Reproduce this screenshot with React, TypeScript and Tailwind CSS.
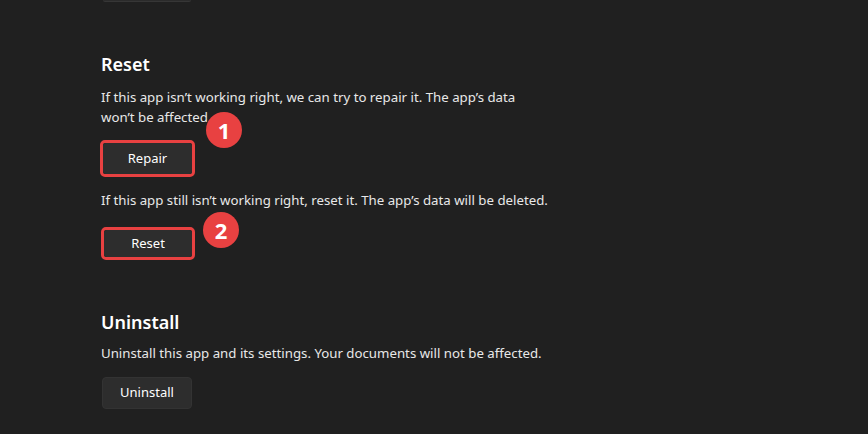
import React from 'react';

const font = { fontFamily: '"Noto Sans", "Open Sans", sans-serif' };

function Badge({ n, className }: { n: string; className: string }) {
  return (
    <div
      className={`absolute flex h-[36px] w-[36px] items-center justify-center rounded-full bg-[#e84141] text-[22px] font-bold leading-none text-white ${className}`}
    >
      {n}
    </div>
  );
}

export default function App() {
  return (
    <div
      style={font}
      className="h-[434px] w-[868px] overflow-hidden bg-[#202020] pl-[101px] text-[#e8e8e8]"
    >
      {/* bottom edge of the button above */}
      <div className="ml-[2px] h-[2px] w-[88px] rounded-b-[4px] border-b border-[#363636] bg-[#2b2b2b]" />

      <h2 className="mt-[48px] h-[28px] text-[18px] font-semibold leading-[28px] text-white">Reset</h2>
      <p className="mt-[9px] text-[13.25px] leading-[20px]">
        If this app isn’t working right, we can try to repair it. The app’s data
        <br />
        won’t be affected.
      </p>

      <div className="relative mt-[13px] ml-[-1px] w-[95px] rounded-[5px] border-[3px] border-[#e84141]">
        <button className="flex h-[31px] w-full items-center justify-center rounded-[3px] bg-[#2d2d2d] text-[13px] text-white">
          Repair
        </button>
        <Badge n="1" className="left-[103px] top-[-31px]" />
      </div>

      <p className="mt-[13px] text-[13.25px] leading-[20px]">
        If this app still isn’t working right, reset it. The app’s data will be deleted.
      </p>

      <div className="relative mt-[17px] w-[94px] rounded-[5px] border-[3px] border-[#e84141]">
        <button className="flex h-[27px] w-full items-center justify-center rounded-[3px] bg-[#2d2d2d] text-[13px] text-white">
          Reset
        </button>
        <Badge n="2" className="left-[99px] top-[-18px]" />
      </div>

      <h2 className="mt-[48px] h-[28px] text-[18px] font-semibold leading-[28px] text-white">Uninstall</h2>
      <p className="mt-[7px] text-[13.25px] leading-[20px]">
        Uninstall this app and its settings. Your documents will not be affected.
      </p>
      <button className="ml-[1px] mt-[14px] flex h-[32px] w-[90px] items-center justify-center rounded-[4px] border border-[#333333] bg-[#2d2d2d] text-[13px] text-white">
        Uninstall
      </button>
    </div>
  );
}
